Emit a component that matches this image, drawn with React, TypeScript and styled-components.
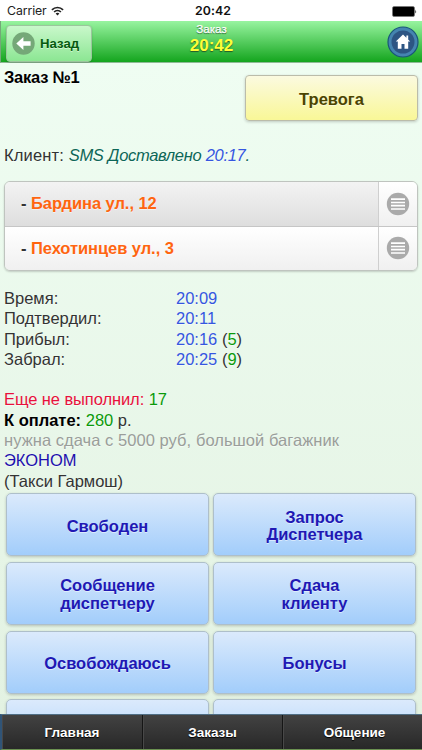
import React from 'react';
import styled, { createGlobalStyle } from 'styled-components';

const Global = createGlobalStyle`
  * { box-sizing: border-box; }
  body {
    margin: 0;
    font-family: "Liberation Sans", Arial, sans-serif;
    font-size: 16.5px;
    color: #333;
    text-shadow: 0 1px 0 rgba(255,255,255,.5);
    overflow: hidden;
  }
`;

const Screen = styled.div`
  width: 422px;
  height: 750px;
  display: flex;
  flex-direction: column;
  overflow: hidden;
  background: #e3f2e2;
`;

const StatusBar = styled.div`
  flex: 0 0 21px;
  display: grid;
  grid-template-columns: 1fr auto 1fr;
  align-items: center;
  padding: 1px 5px 0 7px;
  background: #fff;
  color: #222;
  font: 12.3px/18px Inter, sans-serif;
  text-shadow: none;
`;
const Carrier = styled.div`
  display: flex;
  align-items: center;
  gap: 4px;
  letter-spacing: -0.1px;
`;
const Clock = styled.div`
  font-weight: 600;
  letter-spacing: 0.1px;
  padding-left: 2px;
  color: #111;
`;
const Battery = styled.svg`
  justify-self: end;
`;

const Header = styled.header`
  flex: 0 0 42px;
  display: grid;
  grid-template-columns: 1fr auto 1fr;
  background: linear-gradient(#98f4a0, #14a51e);
  border-bottom: 1px solid #8fb996;
  border-left: 1px solid #74a878;
`;
const BackButton = styled.button`
  display: flex;
  align-items: center;
  gap: 5px;
  width: 86px;
  height: 37px;
  margin: 4px 0 0 5px;
  padding: 0 0 0 5px;
  border: 1px solid #9bc69d;
  border-radius: 4px;
  background: linear-gradient(#c9f8cb, #8ce693);
  box-shadow: 0 1px 2px rgba(0,0,0,.2);
  color: #075b10;
  font: bold 13.2px "Liberation Sans", sans-serif;
  text-shadow: inherit;
`;
const HeaderTitle = styled.div`
  text-align: center;
  color: #fff;
  font-size: 11.6px;
  line-height: 13px;
  padding-top: 1px;
  -webkit-text-stroke: 0.25px #fff;
  text-shadow: 0 1px 1px #245a28;
`;
const HeaderTime = styled.div`
  color: #ffff36;
  font-weight: bold;
  font-size: 17px;
  line-height: 20px;
  padding-top: 1px;
  -webkit-text-stroke: 0;
`;
const HomeButton = styled.svg`
  justify-self: end;
  margin: 5px 3.5px 0 0;
`;

const Content = styled.main`
  flex: 1 1 0;
  min-height: 0;
  overflow: hidden;
  background: linear-gradient(#effdf2, #e3f2e2);
`;
const Summary = styled.div`
  display: flex;
  justify-content: space-between;
  height: 82px;
  padding: 0 4px;
`;
const OrderTitle = styled.h1`
  margin: 4px 0 0;
  font-size: 16.5px;
  line-height: 21px;
  letter-spacing: -0.25px;
  color: #000;
`;
const AlarmButton = styled.button`
  width: 173px;
  height: 45.5px;
  margin-top: 12px;
  padding: 3px 0 0;
  border: 1px solid #bbbcaa;
  border-radius: 4px;
  background: linear-gradient(#fbfae0, #f9f797);
  box-shadow: 0 1px 3px rgba(0,0,0,.2);
  color: #4b4400;
  font: bold 16.5px "Liberation Sans", sans-serif;
  text-shadow: inherit;
`;
const Line = styled.div<{ $color?: string; $spacing?: number }>`
  height: 20.4px;
  line-height: 20.4px;
  padding-left: 4px;
  white-space: pre;
  color: ${p => p.$color || '#333'};
  letter-spacing: ${p => p.$spacing || 0}px;
`;
const Ink = styled.span<{ $color: string }>`
  color: ${p => p.$color};
`;
const Strong = styled.b`
  color: #000;
`;
const Delivery = styled.i`
  color: #0d6757;
  letter-spacing: -0.3px;
`;

const AddressList = styled.div`
  margin: 15.4px 4px 17.2px 4px;
  border: 1px solid #bfc4bf;
  border-radius: 6px;
  overflow: hidden;
  box-shadow: 0 1px 2px rgba(0,0,0,.18);
`;
const AddressRow = styled.div`
  display: flex;
  height: 43.9px;
  & + & { border-top: 1px solid #c6c6c6; }
`;
const Address = styled.div<{ $active?: boolean }>`
  flex: 1;
  padding: 0 16px;
  line-height: 43.4px;
  font-weight: bold;
  letter-spacing: -0.06px;
  color: #ff6510;
  background: ${p => (p.$active ? 'linear-gradient(#f3f3f3, #dedede)' : 'linear-gradient(#fff, #f0f0f0)')};
`;
const AddressMenu = styled.div`
  width: 39px;
  display: flex;
  align-items: center;
  justify-content: center;
  border-left: 1px solid #cfcfcf;
  background: linear-gradient(#fff, #f0f0f0);
`;

const Times = styled.div`
  margin-bottom: 20px;
`;
const TimeRow = styled.div`
  display: grid;
  grid-template-columns: 172px 1fr;
  height: 20.4px;
  line-height: 20.4px;
  padding-left: 4px;
`;

const Actions = styled.div`
  display: grid;
  grid-template-columns: 203px 203px;
  grid-auto-rows: 63px;
  gap: 5.7px 4px;
  padding: 2px 6px 0;
`;
const ActionButton = styled.button`
  padding: 3px 0 0;
  border: 1px solid #aebfca;
  border-radius: 5px;
  background: linear-gradient(#dbeafc, #a2cdfb);
  box-shadow: 0 1px 3px rgba(0,0,0,.2);
  color: #2018b4;
  font: bold 16.5px/17.5px "Liberation Sans", sans-serif;
  white-space: pre-line;
  text-shadow: inherit;
`;

const TabBar = styled.nav`
  flex: 0 0 36px;
  display: grid;
  grid-template-columns: 141px 140px 1fr;
  border-top: 1px solid #4f6e85;
  border-left: 2px solid #305477;
  border-bottom: 1px solid #6b9151;
`;
const Tab = styled.div`
  display: flex;
  align-items: center;
  justify-content: center;
  padding-top: 1px;
  border-right: 1px solid #151515;
  box-shadow: inset 1px 0 #484848;
  background: linear-gradient(#424242, #282828);
  color: #fff;
  font-size: 13.5px;
  font-weight: bold;
  text-shadow: 0 1px 1px #000;
  &:last-child { border-right: 0; padding-left: 4px; }
`;

const WifiIcon = () => (
  <svg width="13" height="10" viewBox="0 0 13 10">
    <g fill="none" stroke="#222" strokeWidth="1.7">
      <path d="M.9 3.8a8 8 0 0 1 11.2 0" />
      <path d="M3.1 6a4.9 4.9 0 0 1 6.8 0" />
    </g>
    <path d="M6.5 9.6 4.6 7.6a2.8 2.8 0 0 1 3.8 0z" fill="#222" />
  </svg>
);
const BackIcon = () => (
  <svg width="23" height="23" viewBox="0 0 23 23">
    <circle cx="11.5" cy="11.5" r="11.2" fill="#75a878" />
    <path d="M4.3 11.5 11.4 5v4.2h7.2v4.6h-7.2V18z" fill="#fff" />
  </svg>
);
const MenuIcon = () => (
  <svg width="24" height="24" viewBox="0 0 24 24">
    <circle cx="12" cy="12" r="11.2" fill="#aaa" />
    <path d="M5 7.2h14M5 10.5h14M5 13.7h14M5 17h14" stroke="#fff" strokeWidth="1.7" />
  </svg>
);

const addresses = [
  { name: 'Бардина ул., 12', active: true },
  { name: 'Пехотинцев ул., 3', active: false },
];
const times = [
  { label: 'Время:', time: '20:09', wait: '' },
  { label: 'Подтвердил:', time: '20:11', wait: '' },
  { label: 'Прибыл:', time: '20:16', wait: '5' },
  { label: 'Забрал:', time: '20:25', wait: '9' },
];
const actions = ['Свободен', 'Запрос\nДиспетчера', 'Сообщение\nдиспетчеру', 'Сдача\nклиенту', 'Освобождаюсь', 'Бонусы', '', ''];
const tabs = ['Главная', 'Заказы', 'Общение'];

export default function App() {
  return (
    <>
      <Global />
      <Screen>
        <StatusBar>
          <Carrier>Carrier <WifiIcon /></Carrier>
          <Clock>20:42</Clock>
          <Battery width="25" height="11" viewBox="0 0 25 11">
            <rect x=".5" y=".5" width="22" height="10" rx="1.5" fill="#000" stroke="#777" strokeWidth=".7" />
            <path d="M23.3 3.5q1.5 2 0 4z" fill="#222" />
          </Battery>
        </StatusBar>
        <Header>
          <BackButton><BackIcon />Назад</BackButton>
          <HeaderTitle>Заказ<HeaderTime>20:42</HeaderTime></HeaderTitle>
          <HomeButton width="32" height="32" viewBox="0 0 32 32">
            <circle cx="16" cy="16" r="15" fill="#4584b0" stroke="#195579" strokeWidth="1.2" />
            <circle cx="16" cy="16" r="11.5" fill="#2d5583" />
            <path d="M16 8.6 23.2 15.6h-2v7.2h-3.7v-4.7h-3v4.7h-3.7v-7.2h-2zM19.4 9.5h1.8v4h-1.8z" fill="#fff" />
          </HomeButton>
        </Header>
        <Content>
          <Summary>
            <OrderTitle>Заказ №1</OrderTitle>
            <AlarmButton>Тревога</AlarmButton>
          </Summary>
          <Line $spacing={0.15}>
            Клиент: <Delivery>SMS Доставлено <Ink $color="#3557e0">20:17</Ink>.</Delivery>
          </Line>
          <AddressList>
            {addresses.map(a => (
              <AddressRow key={a.name}>
                <Address $active={a.active}><Ink $color="#333">- </Ink>{a.name}</Address>
                <AddressMenu><MenuIcon /></AddressMenu>
              </AddressRow>
            ))}
          </AddressList>
          <Times>
            {times.map(t => (
              <TimeRow key={t.label}>
                <span>{t.label}</span>
                <span>
                  <Ink $color="#3557e0">{t.time}</Ink>
                  {t.wait && <> (<Ink $color="#0a9a0a">{t.wait}</Ink>)</>}
                </span>
              </TimeRow>
            ))}
          </Times>
          <Line $color="#e8113c" $spacing={-0.09}>Еще не выполнил: <Ink $color="#0a9a0a">17</Ink></Line>
          <Line><Strong>К оплате:</Strong> <Ink $color="#0a9a0a">280</Ink> р.</Line>
          <Line $color="#9a9e9a" $spacing={0.05}>нужна сдача с 5000 руб, большой багажник</Line>
          <Line $color="#1d0fae">ЭКОНОМ</Line>
          <Line>(Такси Гармош)</Line>
          <Actions>
            {actions.map((label, i) => <ActionButton key={i}>{label}</ActionButton>)}
          </Actions>
        </Content>
        <TabBar>{tabs.map(t => <Tab key={t}>{t}</Tab>)}</TabBar>
      </Screen>
    </>
  );
}
